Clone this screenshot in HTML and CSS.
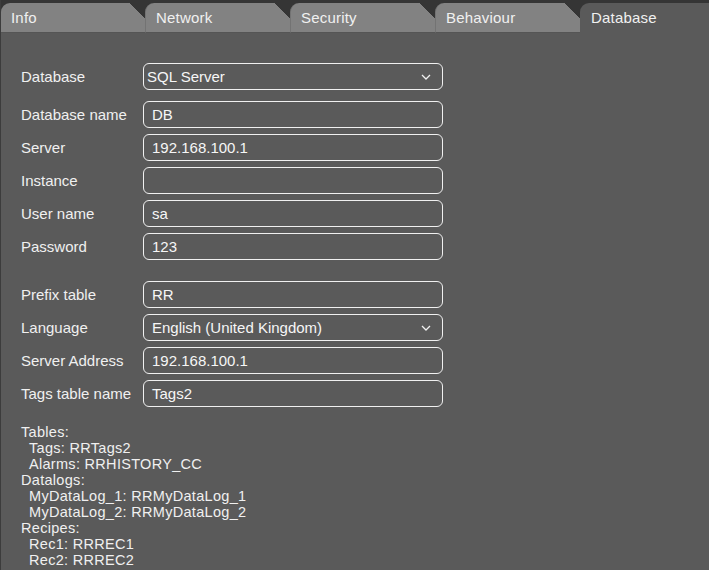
FILE: index.html
```html
<!DOCTYPE html>
<html>
<head>
<meta charset="utf-8">
<link rel="stylesheet" href="styles.css">
</head>
<body>
<div class="tabs">
  <div class="tab">Info</div>
  <div class="tab">Network</div>
  <div class="tab">Security</div>
  <div class="tab">Behaviour</div>
  <div class="tab active">Database</div>
</div>
<div class="content">
  <div class="row first">
    <label class="lbl">Database</label>
    <div class="field select sql">SQL Server<svg class="chev" width="10" height="6" viewBox="0 0 10 6"><polyline points="1,1 5,5 9,1" fill="none" stroke="#f0f0f0" stroke-width="1.3"/></svg></div>
  </div>
  <div class="group">
    <div class="row"><label class="lbl">Database name</label><div class="field">DB</div></div>
    <div class="row"><label class="lbl">Server</label><div class="field">192.168.100.1</div></div>
    <div class="row"><label class="lbl">Instance</label><div class="field"></div></div>
    <div class="row"><label class="lbl">User name</label><div class="field">sa</div></div>
    <div class="row"><label class="lbl">Password</label><div class="field">123</div></div>
  </div>
  <div class="group second">
    <div class="row"><label class="lbl">Prefix table</label><div class="field">RR</div></div>
    <div class="row"><label class="lbl">Language</label><div class="field select">English (United Kingdom)<svg class="chev" width="10" height="6" viewBox="0 0 10 6"><polyline points="1,1 5,5 9,1" fill="none" stroke="#f0f0f0" stroke-width="1.3"/></svg></div></div>
    <div class="row"><label class="lbl">Server Address</label><div class="field">192.168.100.1</div></div>
    <div class="row"><label class="lbl">Tags table name</label><div class="field">Tags2</div></div>
  </div>
  <div class="summary">
    <div class="line">Tables:</div>
    <div class="line sub">Tags: RRTags2</div>
    <div class="line sub">Alarms: RRHISTORY_CC</div>
    <div class="line">Datalogs:</div>
    <div class="line sub">MyDataLog_1: RRMyDataLog_1</div>
    <div class="line sub">MyDataLog_2: RRMyDataLog_2</div>
    <div class="line">Recipes:</div>
    <div class="line sub">Rec1: RRREC1</div>
    <div class="line sub">Rec2: RRREC2</div>
  </div>
</div>
</body>
</html>
```
FILE: styles.css
```css
html, body {
  margin: 0;
  padding: 0;
}
body {
  background: #5a5a5a;
  color: #f0f0f0;
  font-family: "Liberation Sans", Arial, sans-serif;
  font-size: 15px;
  width: 709px;
  height: 570px;
  overflow: hidden;
  border-left: 1px solid #3c3c3c;
  box-sizing: border-box;
}
.tabs {
  display: flex;
  background: #353535;
  padding-top: 3px;
  height: 33px;
  box-sizing: border-box;
}
.tab {
  width: 145px;
  flex: none;
  height: 30px;
  box-sizing: border-box;
  padding-left: 10px;
  line-height: 29px;
  font-size: 15px;
  letter-spacing: 0.2px;
  color: #f0f0f0;
  border-top-left-radius: 9px;
  background: linear-gradient(225deg, #353535 0 11px, #828282 11px);
  border-left: 1px solid #737373;
  border-bottom: 1px solid #555;
}
.tab:first-child {
  border-left: none;
  width: 144px;
}
.tab.active {
  flex: 1;
  background: #5a5a5a;
  border-left: none;
  border-bottom: none;
  padding-left: 11px;
}
.content {
  padding: 30px 0 0 20px;
}
.row {
  display: grid;
  grid-template-columns: 122px 300px;
  align-items: center;
  height: 27px;
}
.row.first {
  margin-bottom: 11px;
}
.group {
  display: flex;
  flex-direction: column;
  gap: 6px;
}
.group.second {
  margin-top: 21px;
}
.lbl {
  color: #f0f0f0;
  white-space: nowrap;
}
.field {
  height: 27px;
  box-sizing: border-box;
  border: 1px solid #f0f0f0;
  border-radius: 6px;
  padding: 0 8px;
  line-height: 25px;
  color: #f6f6f6;
  display: flex;
  align-items: center;
  justify-content: space-between;
}
.field.sql {
  padding-left: 3px;
}
.chev {
  margin-right: 3px;
}
.summary {
  margin-top: 17px;
  color: #f0f0f0;
}
.line {
  height: 16px;
  line-height: 16px;
  font-size: 14.5px;
  letter-spacing: 0.3px;
  white-space: nowrap;
}
.sub {
  padding-left: 8px;
}
```
